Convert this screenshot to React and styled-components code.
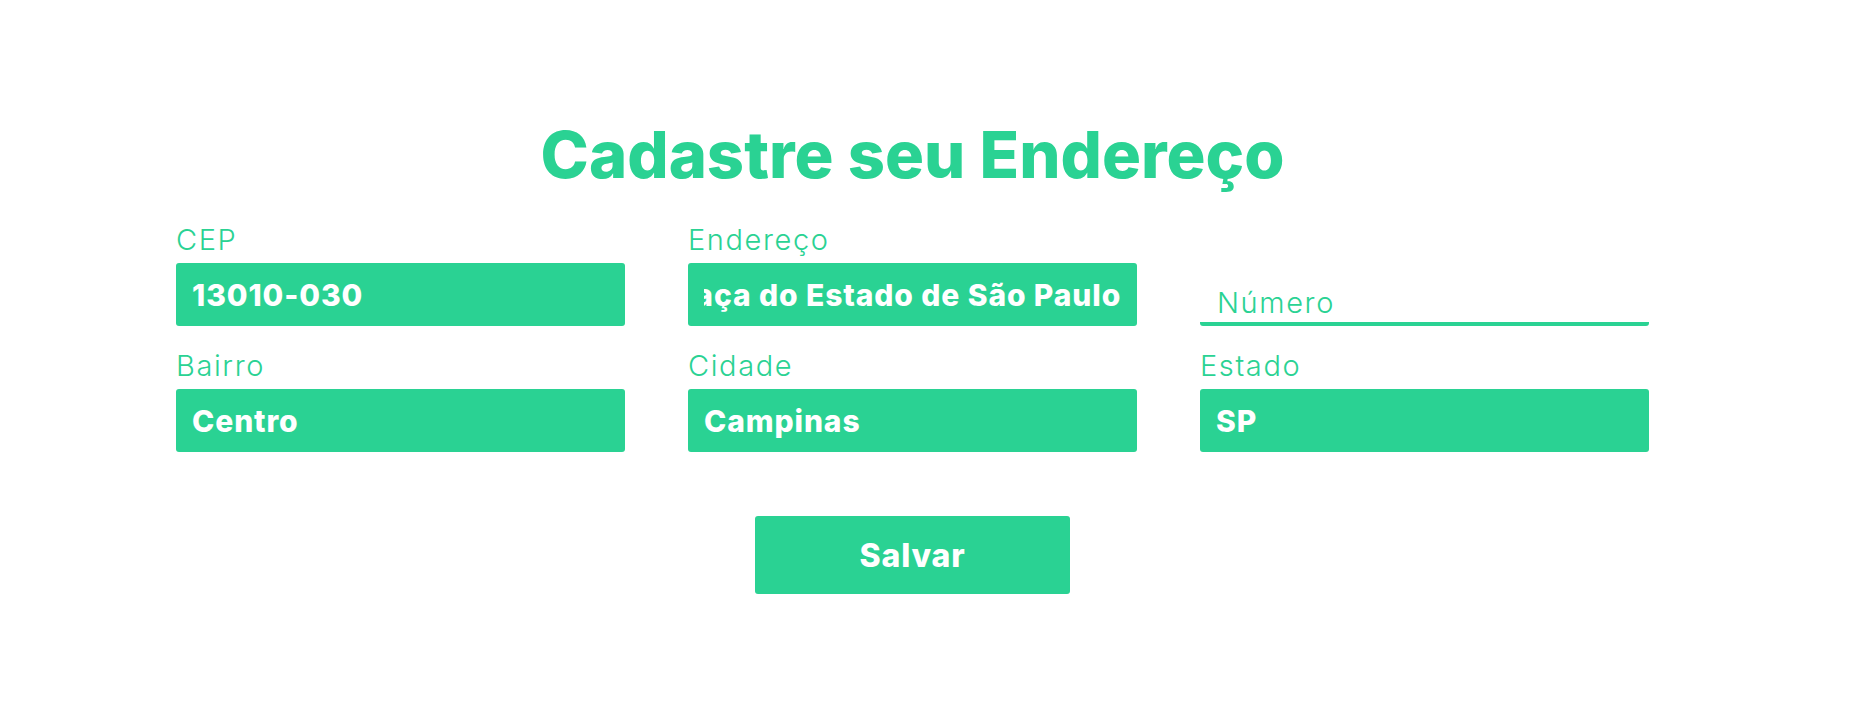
import React, { useEffect, useRef } from "react";
import styled, { createGlobalStyle } from "styled-components";

const green = "#2ad293";

const GlobalStyle = createGlobalStyle`
  * {
    box-sizing: border-box;
  }
  body {
    margin: 0;
    background: #fff;
    font-family: Inter, "Noto Sans", sans-serif;
  }
`;

const Page = styled.div`
  padding: 116px 220px 0 176px;
  min-height: 724px;
`;

const Title = styled.h1`
  margin: 0 0 30px;
  text-align: center;
  font-size: 65px;
  line-height: 77px;
  font-weight: 800;
  color: ${green};
`;

const Form = styled.form`
  display: flex;
  flex-direction: column;
  align-items: center;
`;

const Grid = styled.div`
  display: grid;
  grid-template-columns: repeat(3, 449px);
  column-gap: 63px;
  row-gap: 23px;
`;

const Field = styled.div`
  display: flex;
  flex-direction: column;
  justify-content: flex-end;
`;

const Label = styled.label`
  font-size: 29px;
  line-height: 33px;
  font-weight: 300;
  letter-spacing: 1.6px;
  color: ${green};
  margin-bottom: 7px;
`;

const Input = styled.input`
  width: 100%;
  height: 63px;
  padding: 0 16px;
  border: none;
  border-radius: 3px;
  background: ${green};
  color: #fff;
  font-family: inherit;
  font-size: 30px;
  font-weight: 800;
  letter-spacing: 0.9px;
  outline: none;
  caret-color: #444;
`;

const LineInput = styled.input`
  width: 100%;
  height: 44px;
  padding: 0 17px;
  border: none;
  border-bottom: 4px solid ${green};
  border-radius: 3px;
  background: transparent;
  color: ${green};
  font-family: inherit;
  font-size: 29px;
  font-weight: 300;
  letter-spacing: 1.6px;
  outline: none;
  &::placeholder {
    color: ${green};
    opacity: 1;
  }
`;

const Button = styled.button`
  margin-top: 64px;
  width: 315px;
  height: 78px;
  border: none;
  border-radius: 3px;
  background: ${green};
  color: #fff;
  font-family: inherit;
  font-size: 32px;
  font-weight: 800;
  letter-spacing: 0.8px;
  cursor: pointer;
`;

function App() {
  const addressRef = useRef(null);
  const address = "Praça do Estado de São Paulo";

  useEffect(() => {
    const el = addressRef.current;
    if (!el) return;
    el.focus();
    el.setSelectionRange(address.length, address.length);
    el.scrollLeft = el.scrollWidth;
  }, []);

  return (
    <Page>
      <GlobalStyle />
      <Title>Cadastre seu Endereço</Title>
      <Form onSubmit={(e) => e.preventDefault()}>
        <Grid>
          <Field>
            <Label htmlFor="cep">CEP</Label>
            <Input id="cep" defaultValue="13010-030" />
          </Field>
          <Field>
            <Label htmlFor="endereco">Endereço</Label>
            <Input id="endereco" ref={addressRef} defaultValue={address} />
          </Field>
          <Field>
            <LineInput placeholder="Número" />
          </Field>
          <Field>
            <Label htmlFor="bairro">Bairro</Label>
            <Input id="bairro" defaultValue="Centro" />
          </Field>
          <Field>
            <Label htmlFor="cidade">Cidade</Label>
            <Input id="cidade" defaultValue="Campinas" />
          </Field>
          <Field>
            <Label htmlFor="estado">Estado</Label>
            <Input id="estado" defaultValue="SP" />
          </Field>
        </Grid>
        <Button type="submit">Salvar</Button>
      </Form>
    </Page>
  );
}

export default App;
